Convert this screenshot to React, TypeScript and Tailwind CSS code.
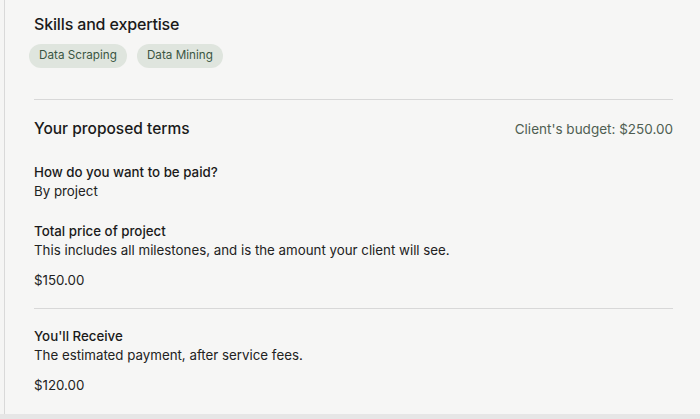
export default function App() {
  return (
    <div
      className="h-[419px] w-[700px] overflow-hidden bg-[#f5f5f4] text-[#1c1c1c]"
      style={{ fontFamily: 'Inter, "Liberation Sans", Arial, sans-serif' }}
    >
      <div className="ml-[4px] h-[414px] border-l border-[#d9d9d9] bg-[#f6f6f5] pl-[29px] pr-[27px] pt-[14px]">
        <h2 className="text-[16px] leading-[20px] font-medium tracking-[-0.15px] text-[#1a1a1a]">
          Skills and expertise
        </h2>
        <div className="-ml-[5px] mt-[10px] flex gap-[10px]">
          <span className="flex h-[24px] items-center rounded-full bg-[#dfe5de] px-[10px] text-[11.7px] text-[#3b5643]">
            Data Scraping
          </span>
          <span className="flex h-[24px] items-center rounded-full bg-[#dfe5de] px-[10px] text-[11.7px] text-[#3b5643]">
            Data Mining
          </span>
        </div>

        <div className="mt-[31px] border-t border-[#d8d8d8]" />

        <div className="mt-[19px] flex items-center justify-between">
          <h3 className="text-[15.5px] leading-[20px] font-medium text-[#1a1a1a]">
            Your proposed terms
          </h3>
          <span className="text-[13.5px] leading-[20px] text-[#4f5e52]">
            Client's budget: $250.00
          </span>
        </div>

        <div className="mt-[24px] text-[13.3px] leading-[19px]">
          <p className="font-medium text-[#1a1a1a]">How do you want to be paid?</p>
          <p className="text-[#222]">By project</p>
        </div>

        <div className="mt-[21px] text-[13.3px] leading-[19px]">
          <p className="font-medium text-[#1a1a1a]">Total price of project</p>
          <p className="text-[#222]">
            This includes all milestones, and is the amount your client will see.
          </p>
          <p className="mt-[11px] text-[#222]">$150.00</p>
        </div>

        <div className="mt-[18px] border-t border-[#d8d8d8]" />

        <div className="mt-[18px] text-[13.3px] leading-[19px]">
          <p className="font-medium text-[#1a1a1a]">You'll Receive</p>
          <p className="text-[#222]">The estimated payment, after service fees.</p>
          <p className="mt-[11px] text-[#222]">$120.00</p>
        </div>
      </div>
      <div className="h-[5px] bg-[#e6e6e6]" />
    </div>
  );
}
